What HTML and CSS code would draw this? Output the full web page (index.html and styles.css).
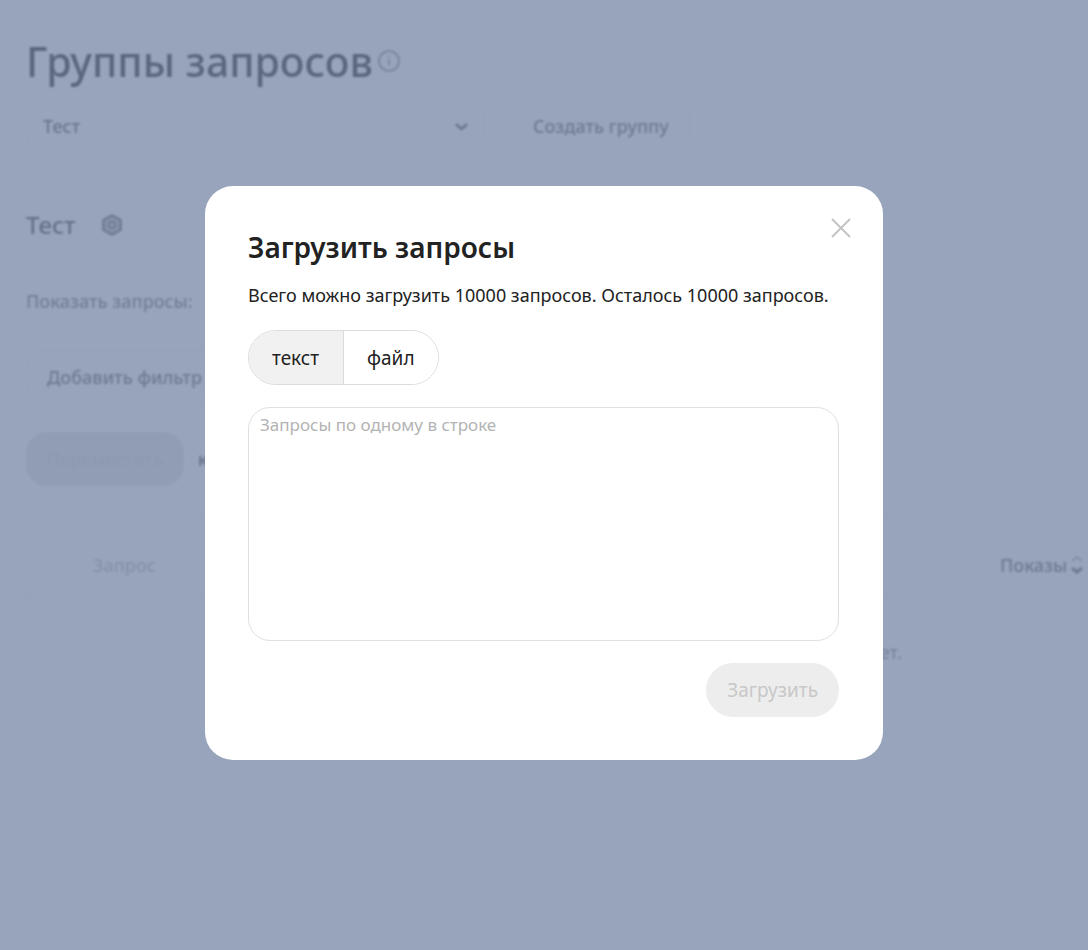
FILE: index.html
```html
<!DOCTYPE html>
<html lang="ru">
<head>
<meta charset="utf-8">
<meta name="viewport" content="width=device-width, initial-scale=1">
<title>Группы запросов</title>
<link rel="stylesheet" href="styles.css">
</head>
<body>
<main class="page">
  <header class="page-head">
    <h1 class="page-title">Группы запросов</h1>
    <svg class="icon-info" viewBox="0 0 24 24" fill="none" stroke="currentColor" stroke-width="2"><circle cx="12" cy="12" r="10"/><path d="M12 10.500v6M12 6.500v2"/></svg>
  </header>
  <div class="group-row">
    <div class="select-wrap">
      <select class="group-select" aria-label="Группа"><option>Тест</option></select>
      <svg class="select-arrow" viewBox="0 0 16 10" fill="none" stroke="currentColor" stroke-width="3"><path d="M2 2l6 5 6-5"/></svg>
    </div>
    <button class="button" type="button">Создать группу</button>
  </div>
  <div class="section-head">
    <h2 class="section-title">Тест</h2>
    <svg class="icon-gear" viewBox="0 0 24 24" fill="none" stroke="currentColor" stroke-width="3" stroke-linejoin="round"><path d="M12 2.500l8.500 4.750v9.500L12 21.500l-8.500-4.750v-9.500z" fill="#ccc"/><circle cx="12" cy="12" r="3.500" stroke-width="2.500"/></svg>
  </div>
  <p class="show-label">Показать запросы:</p>
  <div class="filter-row"><button class="button" type="button">Добавить фильтр</button></div>
  <div class="move-row">
    <button class="button button-off" type="button" disabled>Переместить</button>
    <span>к группе</span>
  </div>
  <div class="table-card">
    <table class="table">
      <thead><tr>
        <th class="col-query">Запрос</th>
        <th class="col-shows"><span class="sort">Показы<svg class="icon-sort" viewBox="0 0 14 20" fill="none" stroke="currentColor" stroke-width="2"><path d="M2 6l5-4 5 4" opacity=".5"/><path d="M2 13l5 4 5-4" stroke-width="3"/></svg></span></th>
      </tr></thead>
      <tbody><tr><td class="empty" colspan="2">Запросов пока нет.</td></tr></tbody>
    </table>
  </div>
</main>
<div class="overlay">
  <section class="dialog" role="dialog" aria-modal="true" aria-labelledby="dialog-title">
    <button class="close" type="button" aria-label="Закрыть"><svg class="icon-close" viewBox="0 0 20 20" fill="none" stroke="currentColor" stroke-width="2"><path d="M1 1l18 18M19 1L1 19"/></svg></button>
    <h2 class="dialog-title" id="dialog-title">Загрузить запросы</h2>
    <p class="dialog-text">Всего можно загрузить 10000 запросов. Осталось 10000 запросов.</p>
    <div class="tabs">
      <button class="tab tab-on" type="button" aria-pressed="true">текст</button>
      <button class="tab" type="button" aria-pressed="false">файл</button>
    </div>
    <textarea class="queries" aria-label="Запросы" placeholder="Запросы по одному в строке"></textarea>
    <button class="submit" type="button" disabled>Загрузить</button>
  </section>
</div>
</body>
</html>
```
FILE: styles.css
```css
* { box-sizing: border-box; }
body {
  margin: 0;
  background: #fff;
  color: #222;
  font: 18px/24px "Noto Sans", sans-serif;
  overflow: hidden;
}
h1, h2, p { margin: 0; }
button, select, textarea { font: inherit; color: inherit; }
svg { display: block; flex: none; }

.page {
  height: 100vh;
  padding: 31px 0 0 26px;
  overflow: hidden;
  filter: blur(1px);
}
.page-head { display: flex; align-items: center; gap: 4px; height: 60px; }
.page-title { font-size: 41px; line-height: 60px; font-weight: 500; }
.icon-info { width: 24px; height: 24px; color: #999; }
.group-row { display: flex; gap: 28px; margin-top: 8px; }
.select-wrap { position: relative; width: 458px; }
.group-select {
  appearance: none;
  width: 100%;
  height: 54px;
  padding: 0 16px;
  border: 1px solid #ececec;
  border-radius: 20px;
  background: none;
  color: #555;
  font-weight: 500;
}
.select-arrow { position: absolute; right: 15px; top: 23px; width: 15px; height: 10px; color: #666; }
.button {
  height: 54px;
  padding: 0 20px;
  border: 1px solid #ececec;
  border-radius: 20px;
  background: none;
  color: #666;
  font-weight: 500;
}
.section-head { display: flex; align-items: center; gap: 24px; height: 32px; margin-top: 56px; }
.section-title { font-size: 24px; line-height: 32px; font-weight: 500; color: #444; }
.icon-gear { width: 24px; height: 24px; color: #777; }
.show-label { margin-top: 48px; color: #777; font-weight: 500; }
.filter-row { margin-top: 37px; }
.move-row { display: flex; align-items: center; gap: 14px; margin-top: 28px; }
.button-off { width: 158px; border-color: #e6e6e6; background: #e6e6e6; color: #d6d6d6; }
.table-card {
  margin-top: 28px;
  height: 236px;
  border: 1px solid #f4f4f4;
  border-right: 0;
  border-radius: 20px 0 0 20px;
}
.table { width: 100%; border-collapse: collapse; }
.table th { height: 82px; padding: 18px 0 0; font-weight: 500; border-bottom: 1px solid #f0f0f0; }
.table .col-query { padding-left: 66px; text-align: left; color: #bbb; }
.table .col-shows { width: 88px; color: #666; }
.sort { display: flex; align-items: center; gap: 3px; }
.icon-sort { width: 14px; height: 20px; }
.empty { height: 110px; padding: 0 186px 0 0; text-align: right; color: #777; }

.overlay {
  position: fixed;
  inset: 0;
  display: flex;
  align-items: center;
  justify-content: center;
  padding: 0 16px 4px;
  background: rgba(112, 129, 162, 0.72);
}
.dialog {
  position: relative;
  display: flex;
  flex-direction: column;
  align-items: flex-start;
  width: 100%;
  max-width: 678px;
  padding: 43px 44px 43px 43px;
  border-radius: 28px;
  background: #fff;
}
.close {
  position: absolute;
  top: 24px;
  right: 24px;
  display: grid;
  place-items: center;
  width: 36px;
  height: 36px;
  padding: 0;
  border: 0;
  background: none;
  color: #c4c4c4;
}
.icon-close { width: 20px; height: 20px; }
.dialog-title { font-size: 28px; line-height: 36px; font-weight: 600; }
.dialog-text { margin-top: 18px; }
.tabs {
  display: flex;
  height: 55px;
  margin-top: 23px;
  border: 1px solid #dcdcdc;
  border-radius: 28px;
  overflow: hidden;
}
.tab { padding: 0 23px; border: 0; background: #fff; font-size: 19px; }
.tab-on { padding-right: 24px; border-right: 1px solid #dcdcdc; background: #f1f1f1; }
.queries {
  width: 100%;
  height: 234px;
  margin-top: 22px;
  padding: 5px 11px;
  border: 1px solid #e0e0e0;
  border-radius: 22px;
  background: #fff;
  font-size: 17px;
  resize: none;
}
.queries::placeholder { color: #b3b3b3; opacity: 1; }
.submit {
  align-self: flex-end;
  height: 54px;
  margin-top: 22px;
  padding: 0 21px;
  border: 0;
  border-radius: 27px;
  background: #ededed;
  color: #c8c8c8;
  font-size: 19px;
}
```
